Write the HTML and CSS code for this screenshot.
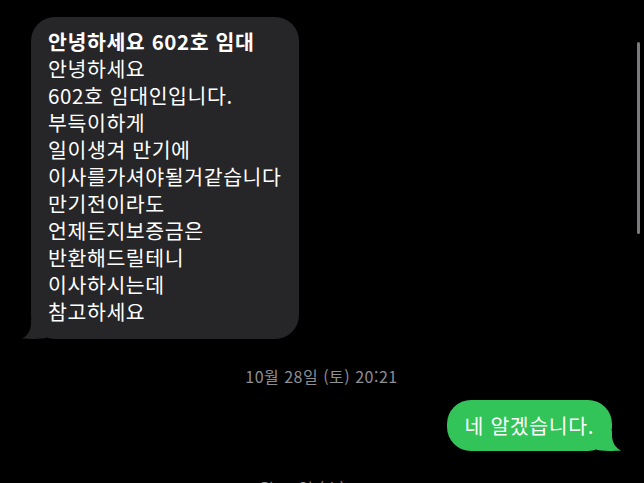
FILE: index.html
```html
<!DOCTYPE html>
<html lang="ko">
<head>
    <meta charset="UTF-8">
    <meta name="viewport" content="width=device-width, initial-scale=1.0">
    <title>메시지</title>
    <link rel="stylesheet" href="styles.css">
</head>
<body>

    <div class="thread">
        <div class="stamp stamp-top">10월 28일 (토) 20:05</div>

        <div class="bubble incoming">
            <p class="subject">안녕하세요 602호 임대</p>
            <p>안녕하세요<br>
            602호 임대인입니다.<br>
            부득이하게<br>
            일이생겨 만기에<br>
            이사를가셔야될거같습니다<br>
            만기전이라도<br>
            언제든지보증금은<br>
            반환해드릴테니<br>
            이사하시는데<br>
            참고하세요</p>
            <svg class="tail" width="24" height="20" viewBox="0 0 24 20">
                <path d="M9 0 L24 0 L24 19 C16 20 6 20.3 0 19.6 C5 17 8.5 12.5 9 5 Z" fill="#262628"/>
            </svg>
        </div>

        <div class="stamp">10월 28일 (토) 20:21</div>

        <div class="bubble outgoing">
            <p>네 알겠습니다.</p>
            <svg class="tail" width="24" height="20" viewBox="0 0 24 20">
                <path d="M15 0 L0 0 L0 19 C8 20 18 20.3 24 19.6 C19 17 15.5 12.5 15 5 Z" fill="#32c458"/>
            </svg>
        </div>

        <div class="stamp">1월 10일 (수) 16:50</div>
    </div>

    <div class="scrollbar"></div>

</body>
</html>
```

FILE: styles.css
```css
body {
    margin: 0;
    background-color: #000;
    color: #fff;
    font-family: "Noto Sans CJK KR", "Noto Sans", sans-serif;
    height: 483px;
    overflow: hidden;
    position: relative;
}

p {
    margin: 0;
}

.thread {
    display: flex;
    flex-direction: column;
    padding: 0 32px 0 31px;
}

.stamp {
    align-self: center;
    color: #8e8e93;
    font-size: 16px;
    letter-spacing: 0.5px;
    line-height: 18px;
    margin: 28px 0 15px;
}

.stamp-top {
    margin: -18px 0 17px;
}

.bubble {
    position: relative;
    font-size: 20.5px;
    letter-spacing: 0.6px;
    line-height: 27px;
    border-radius: 24px;
}

.bubble p {
    position: relative;
    z-index: 1;
}

.bubble .tail {
    position: absolute;
    bottom: 0;
}

.incoming {
    align-self: flex-start;
    background-color: #262628;
    padding: 11px 17px 14px 17px;
}

.incoming .tail {
    left: -9px;
}

.subject {
    font-weight: 700;
}

.outgoing {
    align-self: flex-end;
    background-color: #32c458;
    padding: 12px 18px;
}

.outgoing .tail {
    right: -9px;
}

.scrollbar {
    position: absolute;
    top: 42px;
    right: 4px;
    width: 3px;
    height: 192px;
    border-radius: 2px;
    background-color: #7b7b7e;
}
```
